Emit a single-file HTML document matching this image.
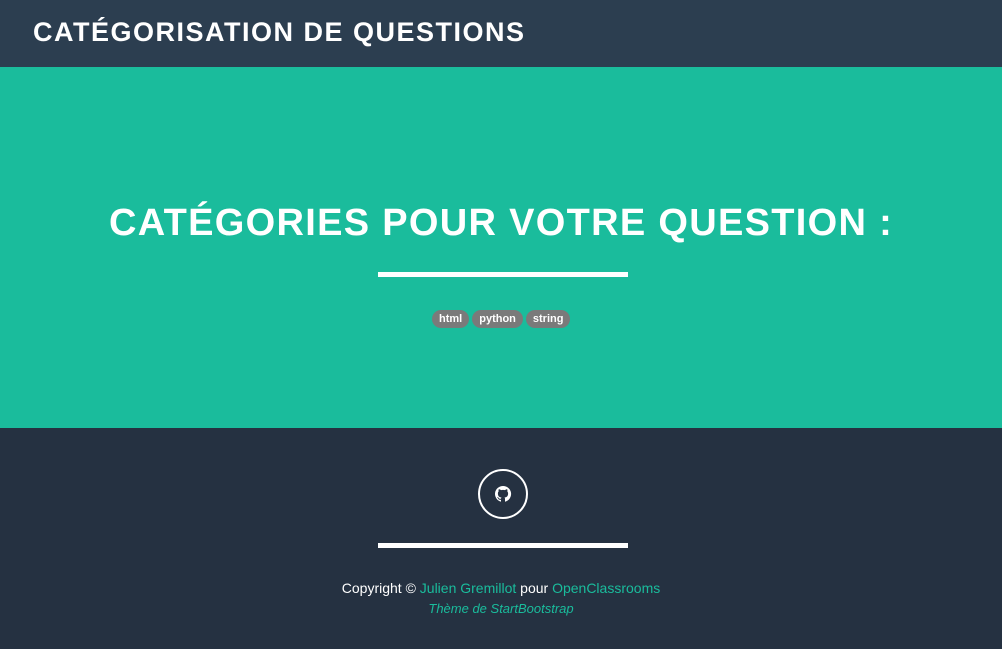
<!DOCTYPE html>
<html><head><meta charset="utf-8"><style>
*{margin:0;padding:0;box-sizing:border-box}
body{width:1002px;height:649px;overflow:hidden;font-family:"Liberation Sans",sans-serif;background:#1abc9c}
.nav{height:67px;background:#2c3e50;padding-left:33px}
.nav h1{color:#fff;font-size:27px;font-weight:bold;line-height:64px;letter-spacing:1.5px}
.hero{height:361px;background:#1abc9c;text-align:center;position:relative}
.hero h2{position:absolute;top:133px;left:0;right:0;color:#fff;font-size:38px;line-height:46px;font-weight:bold;letter-spacing:1.3px}
.bar{position:absolute;left:378px;width:250px;height:5px;background:#fff}
.tags{position:absolute;top:310px;left:432px;display:flex;gap:3px}
.tag{background:#7a7a7a;color:#fff;font-size:11px;font-weight:bold;border-radius:9px;height:18px;line-height:18px;padding:0 7px}
.foot{height:221px;background:#253141;position:relative;text-align:center}
.gh{position:absolute;left:478px;top:41px;width:50px;height:50px;border:2px solid #fff;border-radius:50%}
.txt{position:absolute;top:150px;left:0;right:0;color:#fff;font-size:14px;line-height:20px}
.txt a{color:#1abc9c;text-decoration:none}
.txt i{color:#1abc9c;font-size:13px}
</style></head><body>
<div class="nav"><h1>CATÉGORISATION DE QUESTIONS</h1></div>
<div class="hero">
<h2>CATÉGORIES POUR VOTRE QUESTION :</h2>
<div class="bar" style="top:205px"></div>
<div class="tags" style="top:243px"><span class="tag">html</span><span class="tag">python</span><span class="tag">string</span></div>
</div>
<div class="foot">
<div class="gh"><svg width="46" height="46" viewBox="0 0 46 46" style="position:absolute;left:0;top:0"><path fill="#fff" d="M23 15a8 8 0 0 0-2.5 15.6c.4 0 .5-.2.5-.4v-1.4c-2.2.5-2.7-1-2.7-1-.4-.9-.9-1.2-.9-1.200-.7-.5.1-.5.1-.5.8.1 1.2.8 1.2.8.7 1.2 1.9.9 2.3.7.1-.5.3-.9.5-1.1-1.800-.2-3.6-.9-3.6-4 0-.9.3-1.6.8-2.1-.1-.2-.4-1 .1-2.1 0 0 .7-.2 2.2.8a7.5 7.5 0 0 1 4 0c1.5-1 2.2-.8 2.2-.8.4 1.1.2 1.9.1 2.1.5.6.8 1.3.8 2.1 0 3.1-1.9 3.8-3.6 4 .3.3.5.8.5 1.5v2.2c0 .2.1.5.6.4A8 8 0 0 0 23 15z"/></svg></div>
<div class="bar" style="top:115px"></div>
<div class="txt">Copyright © <a>Julien Gremillot</a> pour <a>OpenClassrooms</a><br><i>Thème de StartBootstrap</i></div>
</div>
</body></html>
